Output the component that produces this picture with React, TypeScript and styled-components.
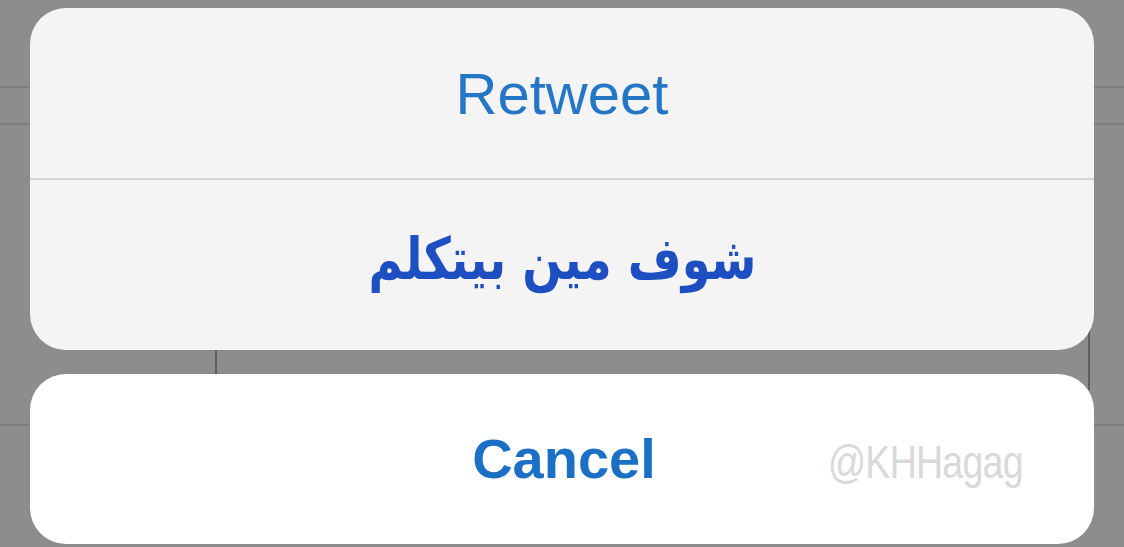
import styled, { createGlobalStyle } from "styled-components";

const GlobalStyle = createGlobalStyle`
  html, body {
    margin: 0;
    padding: 0;
    background: #8d8d8d;
  }
  #root {
    width: 1124px;
    height: 547px;
    overflow: hidden;
  }
`;

type Option = {
  label: string;
  variant: "latin" | "arabic";
};

const options: Option[] = [
  { label: "Retweet", variant: "latin" },
  { label: "شوف مين بيتكلم", variant: "arabic" },
];

export default function App() {
  return (
    <>
      <GlobalStyle />
      <Screen>
        <Backdrop>
          <BackRow $height={88} />
          <BackRow $height={37} />
          <BackRow $height={301} />
          <BackRow $height={121} $last />
          <Divider $left={215} $top={350} $height={24} />
          <Divider $left={1088} $top={300} $height={90} />
        </Backdrop>
        <Sheet>
          <Group>
            {options.map((o, i) => (
              <Action key={o.label} $first={i === 0}>
                <Label $variant={o.variant} dir={o.variant === "arabic" ? "rtl" : "ltr"}>
                  {o.label}
                </Label>
              </Action>
            ))}
          </Group>
          <CancelGroup>
            <CancelLabel>Cancel</CancelLabel>
            <Watermark>@KHHagag</Watermark>
          </CancelGroup>
        </Sheet>
      </Screen>
    </>
  );
}

const Screen = styled.div`
  position: relative;
  width: 1124px;
  height: 547px;
  background: #8d8d8d;
  overflow: hidden;
`;

const Backdrop = styled.div`
  position: absolute;
  inset: 0;
  display: flex;
  flex-direction: column;
`;

const BackRow = styled.div<{ $height: number; $last?: boolean }>`
  height: ${(p) => p.$height}px;
  flex-shrink: 0;
  border-bottom: ${(p) => (p.$last ? "none" : "2px solid #7e7e7e")};
  box-sizing: border-box;
`;

const Divider = styled.div<{ $left: number; $top: number; $height: number }>`
  position: absolute;
  left: ${(p) => p.$left}px;
  top: ${(p) => p.$top}px;
  width: 2px;
  height: ${(p) => p.$height}px;
  background: #5e5e5e;
`;

const Sheet = styled.div`
  position: absolute;
  inset: 0;
  padding: 8px 30px 0;
  display: flex;
  flex-direction: column;
  gap: 24px;
`;

const Group = styled.div`
  background: #f4f4f5;
  border-radius: 36px;
  overflow: hidden;
  display: flex;
  flex-direction: column;
`;

const Action = styled.div<{ $first: boolean }>`
  height: 170px;
  display: flex;
  align-items: center;
  justify-content: center;
  border-top: ${(p) => (p.$first ? "none" : "2px solid #d3d3d5")};
  box-sizing: content-box;
`;

const Label = styled.span<{ $variant: "latin" | "arabic" }>`
  display: inline-block;
  font-family: ${(p) =>
    p.$variant === "arabic" ? '"DejaVu Sans", sans-serif' : '"Liberation Sans", Arial, sans-serif'};
  font-size: 58px;
  font-weight: ${(p) => (p.$variant === "arabic" ? 700 : 400)};
  color: ${(p) => (p.$variant === "arabic" ? "#1e4fc2" : "#2576c6")};
  margin-top: ${(p) => (p.$variant === "arabic" ? "-12px" : "0")};
  transform: ${(p) => (p.$variant === "arabic" ? "scaleX(0.8)" : "none")};
`;

const CancelGroup = styled.div`
  position: relative;
  height: 170px;
  background: #ffffff;
  border-radius: 36px;
  display: flex;
  align-items: center;
  justify-content: center;
`;

const CancelLabel = styled.span`
  font-family: "Liberation Sans", Arial, sans-serif;
  font-size: 56px;
  font-weight: 700;
  color: #1b70c5;
  margin-left: 4px;
  margin-top: -2px;
`;

const Watermark = styled.span`
  position: absolute;
  left: 798px;
  top: 60px;
  font-family: "Liberation Sans", Arial, sans-serif;
  font-size: 47px;
  color: #d9d9d9;
  letter-spacing: -1px;
  transform: scaleX(0.8);
  transform-origin: left center;
`;
